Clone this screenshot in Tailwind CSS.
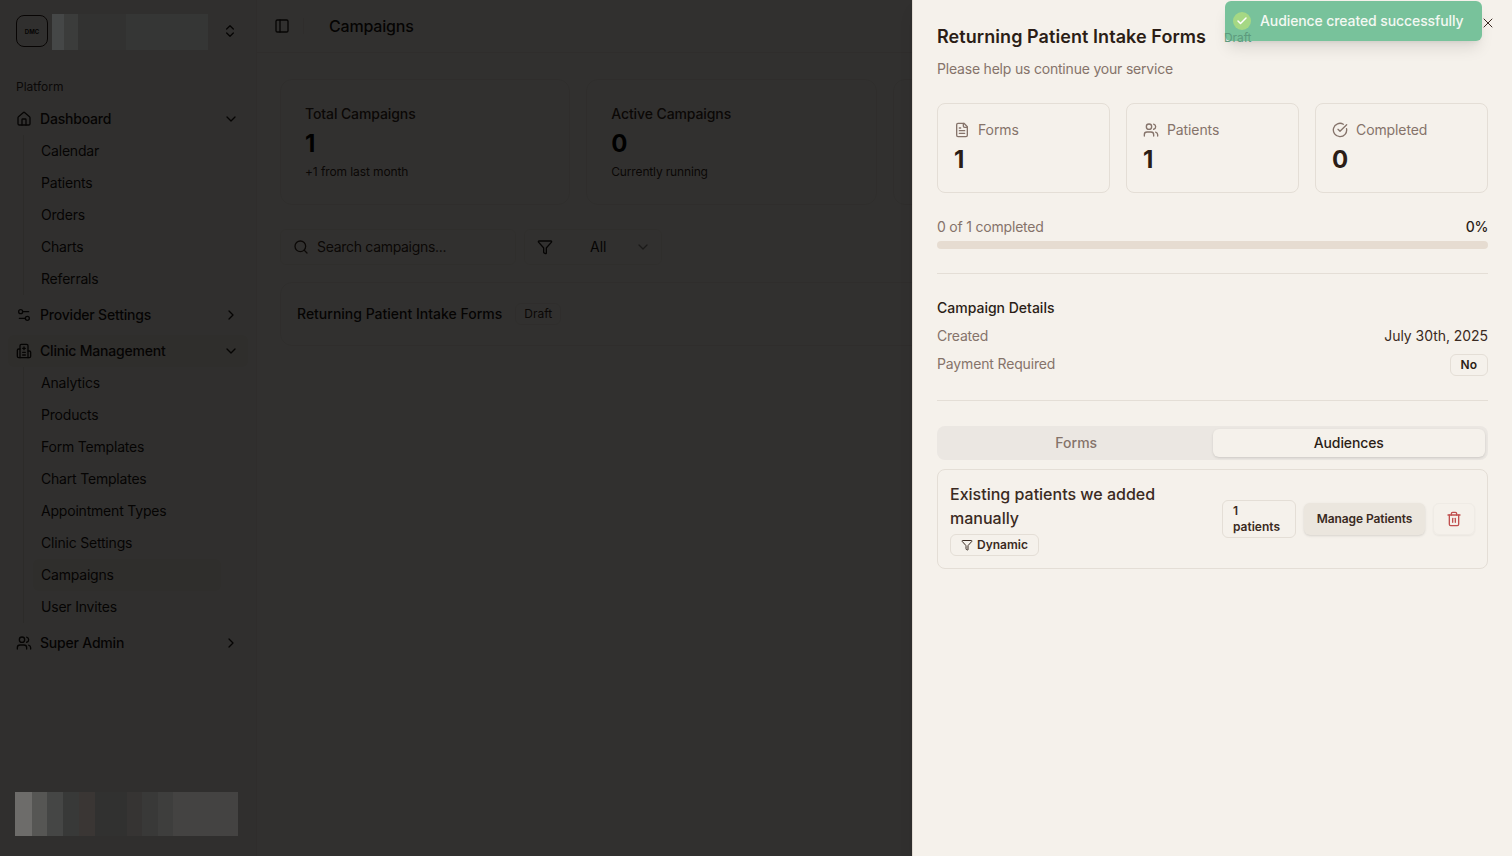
<!DOCTYPE html>
<html lang="en">
<head>
    <meta charset="UTF-8">
    <meta name="viewport" content="width=device-width, initial-scale=1.0">
    <title>Campaigns</title>
    <script src="https://cdn.jsdelivr.net/npm/@tailwindcss/browser@4"></script>
</head>
<body class="bg-[#f5f1eb] text-[#2b1d16] font-['Inter','Liberation_Sans',sans-serif] overflow-hidden">

<div class="relative flex h-[856px] w-[1512px] overflow-hidden">

    <!-- Sidebar -->
    <aside class="flex h-full w-[256px] shrink-0 flex-col bg-[#f0ece6] text-[#1c1512]">
        <div class="flex h-[62px] items-center pl-[16px] pr-[18px]">
            <div class="flex h-8 w-8 shrink-0 items-center justify-center rounded-lg border border-[#2b1d16] text-[6px] font-bold">DMC</div>
            <!-- blurred clinic name -->
            <div class="relative z-20 ml-[4px] mt-[2px] flex h-[36px] w-[156px]">
                <div class="w-[12px] bg-[#454747]"></div>
                <div class="w-[14px] bg-[#3b3c3b]"></div>
                <div class="flex-1 bg-[#323231]"></div>
                <div class="w-[82px] bg-[#353635]"></div>
            </div>
            <svg class="ml-auto h-4 w-4" viewBox="0 0 24 24" fill="none" stroke="currentColor" stroke-width="2" stroke-linecap="round" stroke-linejoin="round"><path d="m7 15 5 5 5-5"/><path d="m7 9 5-5 5 5"/></svg>
        </div>

        <div class="px-[16px] pt-[16px] text-xs leading-[18px] text-[#3a2f2a]">Platform</div>

        <nav class="mt-[7px] flex flex-col px-[8px] text-sm tracking-[-0.2px]">
            <a class="flex h-[32px] items-center gap-[8px] rounded-md px-[8px] font-medium">
                <svg class="h-4 w-4" viewBox="0 0 24 24" fill="none" stroke="currentColor" stroke-width="2" stroke-linecap="round" stroke-linejoin="round"><path d="M15 21v-8a1 1 0 0 0-1-1h-4a1 1 0 0 0-1 1v8"/><path d="M3 10a2 2 0 0 1 .709-1.528l7-5.999a2 2 0 0 1 2.582 0l7 5.999A2 2 0 0 1 21 10v9a2 2 0 0 1-2 2H5a2 2 0 0 1-2-2z"/></svg>
                Dashboard
                <svg class="ml-auto mr-[1px] h-4 w-4" viewBox="0 0 24 24" fill="none" stroke="currentColor" stroke-width="2" stroke-linecap="round" stroke-linejoin="round"><path d="m6 9 6 6 6-6"/></svg>
            </a>
            <div class="ml-[15px] flex flex-col border-l border-[#ddd6cd] pl-[17px]">
                <a class="flex h-[32px] items-center">Calendar</a>
                <a class="flex h-[32px] items-center">Patients</a>
                <a class="flex h-[32px] items-center">Orders</a>
                <a class="flex h-[32px] items-center">Charts</a>
                <a class="flex h-[32px] items-center">Referrals</a>
            </div>
            <a class="mt-[4px] flex h-[32px] items-center gap-[8px] rounded-md px-[8px] font-medium">
                <svg class="h-4 w-4" viewBox="0 0 24 24" fill="none" stroke="currentColor" stroke-width="2" stroke-linecap="round" stroke-linejoin="round"><path d="M14 17H5"/><path d="M19 7h-9"/><circle cx="17" cy="17" r="3"/><circle cx="7" cy="7" r="3"/></svg>
                Provider Settings
                <svg class="ml-auto mr-[1px] h-4 w-4" viewBox="0 0 24 24" fill="none" stroke="currentColor" stroke-width="2" stroke-linecap="round" stroke-linejoin="round"><path d="m9 18 6-6-6-6"/></svg>
            </a>
            <a class="mt-[4px] flex h-[32px] items-center gap-[8px] rounded-md bg-[#e9e3da] px-[8px] font-medium">
                <svg class="h-4 w-4" viewBox="0 0 24 24" fill="none" stroke="currentColor" stroke-width="2" stroke-linecap="round" stroke-linejoin="round"><path d="M12 6v4"/><path d="M14 14h-4"/><path d="M14 18h-4"/><path d="M14 8h-4"/><path d="M18 12h2a2 2 0 0 1 2 2v6a2 2 0 0 1-2 2H4a2 2 0 0 1-2-2v-9a2 2 0 0 1 2-2h2"/><path d="M18 22V4a2 2 0 0 0-2-2H8a2 2 0 0 0-2 2v18"/></svg>
                Clinic Management
                <svg class="ml-auto mr-[1px] h-4 w-4" viewBox="0 0 24 24" fill="none" stroke="currentColor" stroke-width="2" stroke-linecap="round" stroke-linejoin="round"><path d="m6 9 6 6 6-6"/></svg>
            </a>
            <div class="ml-[15px] flex flex-col border-l border-[#ddd6cd] pl-[17px]">
                <a class="flex h-[32px] items-center">Analytics</a>
                <a class="flex h-[32px] items-center">Products</a>
                <a class="flex h-[32px] items-center">Form Templates</a>
                <a class="flex h-[32px] items-center">Chart Templates</a>
                <a class="flex h-[32px] items-center">Appointment Types</a>
                <a class="flex h-[32px] items-center">Clinic Settings</a>
                <a class="-ml-[8px] mr-[27px] flex h-[32px] items-center rounded-md bg-[#e9e3da] pl-[8px]">Campaigns</a>
                <a class="flex h-[32px] items-center">User Invites</a>
            </div>
            <a class="mt-[4px] flex h-[32px] items-center gap-[8px] rounded-md px-[8px] font-medium">
                <svg class="h-4 w-4" viewBox="0 0 24 24" fill="none" stroke="currentColor" stroke-width="2" stroke-linecap="round" stroke-linejoin="round"><path d="M16 21v-2a4 4 0 0 0-4-4H6a4 4 0 0 0-4 4v2"/><circle cx="9" cy="7" r="4"/><path d="M22 21v-2a4 4 0 0 0-3-3.87"/><path d="M16 3.13a4 4 0 0 1 0 7.75"/></svg>
                Super Admin
                <svg class="ml-auto mr-[1px] h-4 w-4" viewBox="0 0 24 24" fill="none" stroke="currentColor" stroke-width="2" stroke-linecap="round" stroke-linejoin="round"><path d="m9 18 6-6-6-6"/></svg>
            </a>
        </nav>

        <!-- blurred user block -->
        <div class="relative z-20 mx-[15px] mb-[20px] mt-auto flex h-[44px] w-[223px]">
            <div class="w-[17px] bg-[#6d6c6a]"></div>
            <div class="w-[15px] bg-[#565654]"></div>
            <div class="w-[16px] bg-[#454645]"></div>
            <div class="w-[16px] bg-[#383938]"></div>
            <div class="w-[16px] bg-[#3a3634]"></div>
            <div class="w-[32px] bg-[#313130]"></div>
            <div class="w-[15px] bg-[#363433]"></div>
            <div class="w-[16px] bg-[#393938]"></div>
            <div class="w-[15px] bg-[#3e3e3d]"></div>
            <div class="flex-1 bg-[#444342]"></div>
        </div>
    </aside>

    <!-- Main -->
    <main class="flex h-full min-w-0 flex-1 flex-col border-l border-[#e8e2da]">
        <header class="flex h-[53px] shrink-0 items-center border-b border-[#e8e2da] pl-[17px]">
            <svg class="h-4 w-4 text-[#1c1512]" viewBox="0 0 24 24" fill="none" stroke="currentColor" stroke-width="2" stroke-linecap="round" stroke-linejoin="round"><rect width="18" height="18" x="3" y="3" rx="2"/><path d="M9 3v18"/></svg>
            <div class="ml-[13px] h-4 w-px bg-[#e8e2da]"></div>
            <h1 class="ml-[25px] text-base font-medium tracking-[-0.2px] text-[#1c1512]">Campaigns</h1>
        </header>

        <div class="flex flex-col px-[23px] pt-[26px]">
            <div class="grid grid-cols-4 gap-[16px]">
                <div class="h-[126px] rounded-xl border border-[#e8e2da] px-[24px] pt-[24px]">
                    <div class="text-sm font-medium leading-[20px] tracking-[-0.1px] text-[#3a2a22]">Total Campaigns</div>
                    <div class="mt-[4px] text-2xl font-bold leading-[32px] text-black">1</div>
                    <div class="mt-[4px] text-xs leading-[16px] tracking-[-0.1px] text-[#3a2a22]">+1 from last month</div>
                </div>
                <div class="h-[126px] rounded-xl border border-[#e8e2da] px-[24px] pt-[24px]">
                    <div class="text-sm font-medium leading-[20px] tracking-[-0.1px] text-[#3a2a22]">Active Campaigns</div>
                    <div class="mt-[4px] text-2xl font-bold leading-[32px] text-black">0</div>
                    <div class="mt-[4px] text-xs leading-[16px] tracking-[-0.15px] text-[#3a2a22]">Currently running</div>
                </div>
                <div class="h-[126px] rounded-xl border border-[#e8e2da]"></div>
                <div class="h-[126px] rounded-xl border border-[#e8e2da]"></div>
            </div>

            <div class="mt-[24px] flex h-[36px] items-center gap-[8px]">
                <div class="flex h-[36px] w-[236px] items-center gap-[8px] rounded-md border border-[#ebe5dd] pl-[12px] text-sm tracking-[-0.3px] text-[#3a2a22]">
                    <svg class="h-4 w-4" viewBox="0 0 24 24" fill="none" stroke="currentColor" stroke-width="2" stroke-linecap="round" stroke-linejoin="round"><path d="m21 21-4.34-4.34"/><circle cx="11" cy="11" r="8"/></svg>
                    Search campaigns...
                </div>
                <div class="flex h-[36px] w-[138px] items-center rounded-md border border-[#ebe5dd] pl-[12px] text-sm text-[#1c1512]">
                    <svg class="h-4 w-4" viewBox="0 0 24 24" fill="none" stroke="currentColor" stroke-width="2" stroke-linecap="round" stroke-linejoin="round"><path d="M10 20a1 1 0 0 0 .553.895l2 1A1 1 0 0 0 14 21v-7a2 2 0 0 1 .517-1.341L21.74 4.67A1 1 0 0 0 21 3H3a1 1 0 0 0-.742 1.67l7.225 7.989A2 2 0 0 1 10 14z"/></svg>
                    <span class="ml-[37px]">All</span>
                    <svg class="ml-[29px] h-4 w-4 opacity-50" viewBox="0 0 24 24" fill="none" stroke="currentColor" stroke-width="2" stroke-linecap="round" stroke-linejoin="round"><path d="m6 9 6 6 6-6"/></svg>
                </div>
            </div>

            <div class="mt-[17px] flex h-[64px] items-center gap-[13px] rounded-xl border border-[#e8e2da] pl-[16px]">
                <span class="text-sm font-medium text-[#1c1512]">Returning Patient Intake Forms</span>
                <span class="rounded-md border border-[#e8e2da] px-[8px] py-[2px] text-xs text-[#3a2a22]">Draft</span>
            </div>
        </div>
    </main>

    <!-- Dim overlay behind the sheet -->
    <div class="absolute inset-0 z-10 bg-black/80"></div>

    <!-- Campaign sheet -->
    <section class="absolute inset-y-0 right-0 z-30 flex w-[600px] flex-col border-l border-[#e1dbd3] bg-[#f5f1eb] pl-[24px] pr-[24px] shadow-lg">
        <div class="flex items-center pt-[24px]">
            <h2 class="text-lg font-semibold leading-[26px] tracking-[0.07px] text-[#2b1d16]">Returning Patient Intake Forms</h2>
            <span class="relative z-10 ml-[18px] mt-[2px] text-xs tracking-[-0.1px] text-[#5d9a7d]">Draft</span>
        </div>
        <p class="mt-[9px] text-sm leading-[20px] tracking-[-0.2px] text-[#85736a]">Please help us continue your service</p>

        <div class="mt-[24px] grid grid-cols-3 gap-[16px]">
            <div class="h-[90px] rounded-lg border border-[#e4ded6] px-[16px] pt-[16px]">
                <div class="flex items-center gap-[8px] text-sm leading-[20px] tracking-[-0.1px] text-[#85736a]">
                    <svg class="h-4 w-4" viewBox="0 0 24 24" fill="none" stroke="currentColor" stroke-width="2" stroke-linecap="round" stroke-linejoin="round"><path d="M15 2H6a2 2 0 0 0-2 2v16a2 2 0 0 0 2 2h12a2 2 0 0 0 2-2V7Z"/><path d="M14 2v4a2 2 0 0 0 2 2h4"/><path d="M10 9H8"/><path d="M16 13H8"/><path d="M16 17H8"/></svg>
                    Forms
                </div>
                <div class="mt-[4px] text-2xl font-bold leading-[32px]">1</div>
            </div>
            <div class="h-[90px] rounded-lg border border-[#e4ded6] px-[16px] pt-[16px]">
                <div class="flex items-center gap-[8px] text-sm leading-[20px] tracking-[-0.1px] text-[#85736a]">
                    <svg class="h-4 w-4" viewBox="0 0 24 24" fill="none" stroke="currentColor" stroke-width="2" stroke-linecap="round" stroke-linejoin="round"><path d="M16 21v-2a4 4 0 0 0-4-4H6a4 4 0 0 0-4 4v2"/><circle cx="9" cy="7" r="4"/><path d="M22 21v-2a4 4 0 0 0-3-3.87"/><path d="M16 3.13a4 4 0 0 1 0 7.75"/></svg>
                    Patients
                </div>
                <div class="mt-[4px] text-2xl font-bold leading-[32px]">1</div>
            </div>
            <div class="h-[90px] rounded-lg border border-[#e4ded6] px-[16px] pt-[16px]">
                <div class="flex items-center gap-[8px] text-sm leading-[20px] tracking-[-0.1px] text-[#85736a]">
                    <svg class="h-4 w-4" viewBox="0 0 24 24" fill="none" stroke="currentColor" stroke-width="2" stroke-linecap="round" stroke-linejoin="round"><path d="M21.801 10A10 10 0 1 1 17 3.335"/><path d="m9 11 3 3L22 4"/></svg>
                    Completed
                </div>
                <div class="mt-[4px] text-2xl font-bold leading-[32px]">0</div>
            </div>
        </div>

        <div class="mt-[24px] flex justify-between text-sm leading-[20px]">
            <span class="tracking-[-0.2px] text-[#85736a]">0 of 1 completed</span>
            <span class="font-medium tracking-[-0.3px]">0%</span>
        </div>
        <div class="mt-[4px] h-[8px] rounded-full bg-[#e6dcd1]"></div>

        <div class="mt-[24px] h-px bg-[#e4ded6]"></div>

        <h3 class="mt-[24px] text-sm font-medium leading-[20px]">Campaign Details</h3>
        <div class="mt-[8px] flex h-[20px] items-center justify-between text-sm">
            <span class="tracking-[-0.2px] text-[#85736a]">Created</span>
            <span class="tracking-[-0.05px] text-[#3a2a22]">July 30th, 2025</span>
        </div>
        <div class="mt-[8px] flex h-[20px] items-center justify-between text-sm">
            <span class="tracking-[-0.15px] text-[#85736a]">Payment Required</span>
            <span class="translate-y-px rounded-md border border-[#e4ded6] px-[10px] py-[2px] text-xs font-semibold leading-[16px]">No</span>
        </div>

        <div class="mt-[26px] h-px bg-[#e4ded6]"></div>

        <div class="mt-[25px] grid h-[34px] grid-cols-2 rounded-lg bg-[#ebe7e2] p-[3px] text-sm">
            <div class="flex items-center justify-center font-medium text-[#85736a]">Forms</div>
            <div class="flex items-center justify-center rounded-md bg-[#f5f1eb] font-medium tracking-[-0.1px] text-[#2b1d16] shadow-sm">Audiences</div>
        </div>

        <div class="mt-[9px] flex h-[100px] items-center rounded-lg border border-[#e4ded6] px-[12px]">
            <div class="w-[272px]">
                <div class="text-base font-medium leading-[24px] text-[#3a2a22]">Existing patients we added manually</div>
                <span class="mt-[4px] inline-flex h-[22px] items-center gap-[4px] rounded-md border border-[#e4ded6] px-[10px] text-xs font-semibold text-[#3a2a22]">
                    <svg class="h-3 w-3" viewBox="0 0 24 24" fill="none" stroke="currentColor" stroke-width="2" stroke-linecap="round" stroke-linejoin="round"><path d="M10 20a1 1 0 0 0 .553.895l2 1A1 1 0 0 0 14 21v-7a2 2 0 0 1 .517-1.341L21.74 4.67A1 1 0 0 0 21 3H3a1 1 0 0 0-.742 1.67l7.225 7.989A2 2 0 0 1 10 14z"/></svg>
                    Dynamic
                </span>
            </div>
            <span class="w-[74px] rounded-md border border-[#e4ded6] py-[2px] pl-[10px] pr-[12px] text-xs font-semibold leading-[16px] text-[#3a2a22]">1 patients</span>
            <button class="ml-[8px] flex h-[32px] w-[121px] items-center justify-center rounded-md bg-[#ebe6de] text-xs font-semibold tracking-[-0.1px] text-[#3a2a22] shadow-sm">Manage Patients</button>
            <button class="ml-[8px] flex h-[32px] w-[42px] items-center justify-center rounded-md border border-[#efebe5] text-[#c0504f] shadow-xs">
                <svg class="h-4 w-4" viewBox="0 0 24 24" fill="none" stroke="currentColor" stroke-width="2" stroke-linecap="round" stroke-linejoin="round"><path d="M3 6h18"/><path d="M19 6v14c0 1-1 2-2 2H7c-1 0-2-1-2-2V6"/><path d="M8 6V4c0-1 1-2 2-2h4c1 0 2 1 2 2v2"/><line x1="10" x2="10" y1="11" y2="17"/><line x1="14" x2="14" y1="11" y2="17"/></svg>
            </button>
        </div>

        <!-- Close -->
        <svg class="absolute right-[16px] top-[15px] h-4 w-4 text-[#3a2a22]" viewBox="0 0 24 24" fill="none" stroke="currentColor" stroke-width="1.5" stroke-linecap="round" stroke-linejoin="round"><path d="M18 6 6 18"/><path d="m6 6 12 12"/></svg>

        <!-- Toast -->
        <div class="absolute left-[312px] top-[1px] flex h-[40px] w-[257px] items-center gap-[9px] rounded-md bg-[#78c29b] pb-[1px] pl-[8px] text-sm font-medium tracking-[-0.1px] text-[#f3f8f2] shadow-lg">
            <span class="flex h-[18px] w-[18px] items-center justify-center rounded-full bg-[#a5d884]">
                <svg class="h-3 w-3 text-white" viewBox="0 0 24 24" fill="none" stroke="currentColor" stroke-width="3" stroke-linecap="round" stroke-linejoin="round"><path d="M20 6 9 17l-5-5"/></svg>
            </span>
            Audience created successfully
        </div>
    </section>
</div>

</body>
</html>
